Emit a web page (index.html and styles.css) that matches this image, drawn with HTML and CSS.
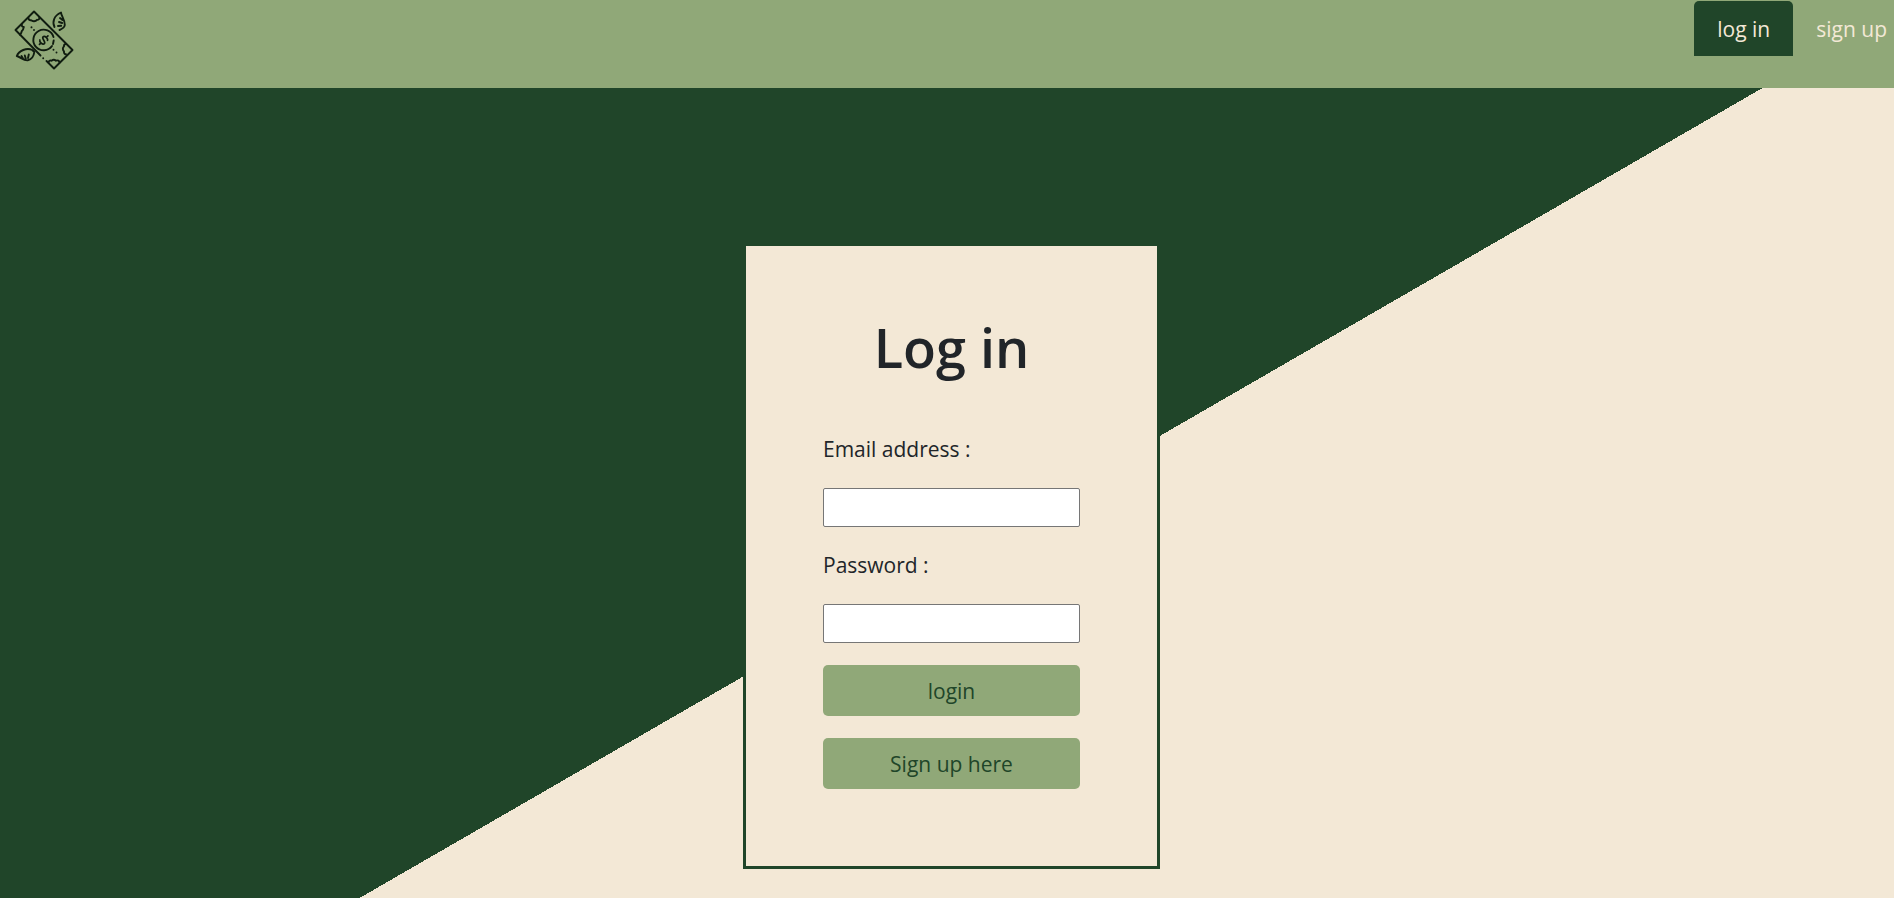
FILE: index.html
```html
<!DOCTYPE html>
<html lang="en">
<head>
<meta charset="utf-8">
<meta name="viewport" content="width=device-width, initial-scale=1">
<title>Log in</title>
<link rel="stylesheet" href="styles.css">
</head>
<body>
<header class="site-header">
  <a class="brand" href="#" aria-label="Home">
    <svg class="logo" viewBox="12 8 64 64" fill="none" stroke="#101c10" stroke-width="1.9" stroke-linecap="round" stroke-linejoin="round" aria-hidden="true">
      <path d="M40.500 55.500 15.500 30 34 11.500 72.500 50 54 68.500 46.500 61M43.200 58.200v.1"/>
      <path d="M28.500 18c0 1.500 1 2.500 2.500 2.200 1.500 1.500 4.500 1.500 6-.4 1.500.2 2.500-.6 2.300-2M21.800 24.500c-.3 1.500.7 2.500 2 2.500-.7 1.500-.3 2.700-1.500 3.500-1 .8-.6 2.200-1.500 3-.8.700-.5 1.300-.5 1.500"/>
      <path d="M66 44c-1.500 0-2.200 1-2 2.500-1.500 1-1.500 3.500 0 5-.2 1.500.6 2.800 2 2.800M48.500 62.500c.3-1.700 1.300-2.500 3-1.800 1.300-1 3.500-.8 4.500 0 1.800-.8 3.300.2 3.500 1.800"/>
      <path d="M53.500 37A10.300 10.300 0 1 0 52 46M53.700 40.500 53 44"/>
      <path transform="translate(43.700 40.200) rotate(45)" stroke-width="1.700" d="M2.800-2.600C2.200-4.200-2.800-4.400-2.800-1.900S2.900-.6 2.900 1.900-2.200 4.300-2.900 2.500M0-6v2M0 4v2"/>
      <path d="M31.500 27.300v.1M34 30v.1M53.500 49.700v.1M56.500 52.500v.1"/>
      <path d="M54.500 27C52 22 54 15.500 61 12.500c0 3 4 7 3.800 12.500-.3 2.500-2.800 4-5.300 5M60 18l2.500 2M59 22l3.200 1M58 26l3.200-.2"/>
      <path d="M16.800 56c2-5.500 10-8.500 15.500-6l2 2c-.5 4-3 7.500-6.500 8.300-4 .5-7-3-11-4.300M21.500 56l1.500 2.500M24.800 55.500l1 3.200M28.800 54.500l-.8 3.500"/>
    </svg>
  </a>
  <nav class="nav">
    <a class="nav-link active" href="#login" aria-current="page">log in</a>
    <a class="nav-link" href="#signup">sign up</a>
  </nav>
</header>
<main class="page">
  <form class="card">
    <h1 class="title">Log in</h1>
    <label class="label" for="email">Email address :</label>
    <input class="field" id="email" type="email" autocomplete="email">
    <label class="label" for="password">Password :</label>
    <input class="field" id="password" type="password" autocomplete="current-password">
    <button class="button" type="submit">login</button>
    <button class="button" type="button">Sign up here</button>
  </form>
</main>
</body>
</html>
```
FILE: styles.css
```css
* {
  box-sizing: border-box;
}

body {
  display: flex;
  flex-direction: column;
  min-height: 100vh;
  margin: 0;
  color: #212529;
  font-family: "Segoe UI", "Open Sans", "Noto Sans", sans-serif;
  font-size: 21px;
  line-height: 33px;
}

.site-header {
  display: flex;
  justify-content: space-between;
  align-items: flex-start;
  height: 88px;
  padding: 1px 0 0 12px;
  background: #90a878;
}

.brand {
  display: block;
  padding-top: 7px;
}

.logo {
  display: block;
  width: 64px;
  height: 64px;
}

.nav {
  display: flex;
}

.nav-link {
  padding: 12px 23px 10px;
  border-radius: 5px 5px 0 0;
  color: #f3e8d6;
  text-decoration: none;
}

.nav-link:last-child {
  padding-right: 7px;
}

.nav-link.active {
  background: #204529;
}

.page {
  display: flex;
  flex: 1;
  justify-content: center;
  align-items: flex-start;
  padding: 155px 0 24px 9px;
  background: linear-gradient(150deg, #204529 calc(50% + 57px), #f3e8d6 calc(50% + 57px));
}

.card {
  display: flex;
  flex-direction: column;
  gap: 22px;
  width: 417px;
  max-width: 100%;
  padding: 77px;
  border: 3px solid #204529;
  background: #f3e8d6;
}

.title {
  margin: 0 0 40px;
  font-size: 54px;
  font-weight: 600;
  line-height: 48px;
  text-align: center;
}

.field {
  width: 100%;
  height: 39px;
  padding: 1px 2px;
  border: 1px solid #767676;
  border-radius: 2px;
  background: #fff;
  font: inherit;
}

.button {
  padding: 10px 18px 8px;
  border: 0;
  border-radius: 5px;
  background: #90a878;
  color: #204529;
  font: inherit;
}
```
